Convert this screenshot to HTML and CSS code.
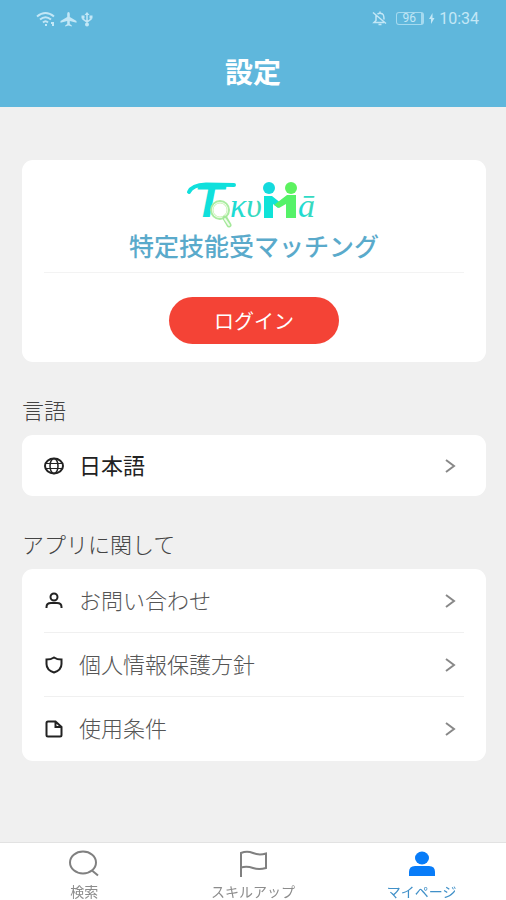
FILE: index.html
```
<!DOCTYPE html>
<html lang="ja">

<head>
    <meta charset="UTF-8">
    <meta name="viewport" content="width=device-width, initial-scale=1.0">
    <title>設定</title>
    <link rel="stylesheet" href="styles.css">
</head>

<body>
    <header class="header">
        <div class="status-bar">
            <div class="status-group">
                <svg width="20" height="16" viewBox="0 0 20 16" fill="none" stroke="currentColor" stroke-width="2">
                    <path d="M1 5.500Q9.500-1.500 18 5.500M4 8.500Q9.500 4 15 8.500M7 11.500Q9.500 9 12 11.500" />
                    <path d="M9 14h2M15 12h3M16 14h2" />
                </svg>
                <svg width="17" height="16" viewBox="0 0 17 16" fill="currentColor">
                    <path d="M8.500 1q1.300 0 1.300 2v3l6.700 4v1.800L9.800 10v3l2 1.400v1l-3.300-.9-3.300.9v-1l2-1.400v-3L0.500 11.800V10l6.700-4V3q0-2 1.300-2z" />
                </svg>
                <svg width="12" height="16" viewBox="0 0 12 16" fill="none" stroke="currentColor" stroke-width="1.500">
                    <path d="M6 3v10M2 6v2l4 3 4-3V5" />
                    <path d="M3.500 4L6 1l2.500 3zM0.500 4.500h3v3h-3zM8.500 4.500h3v3h-3z" fill="currentColor" stroke="none" />
                    <circle cx="6" cy="13.500" r="2" fill="currentColor" stroke="none" />
                </svg>
            </div>
            <div class="status-group">
                <svg width="16" height="15" viewBox="0 0 16 15" fill="none" stroke="currentColor" stroke-width="1.500">
                    <path d="M1 1.500l13 11M4 4.500v5L2 11.500h10M5.500 3Q8 1.500 10.500 3 12 4 12 8.500M8 0.500v2M6.500 13.500h3" />
                </svg>
                <span class="battery">96</span>
                <svg width="7" height="13" viewBox="0 0 7 13" fill="currentColor">
                    <path d="M4.500 1L1 7h2v5l3.500-6H4.500z" />
                </svg>
                <span class="clock">10:34</span>
            </div>
        </div>
        <h1 class="title">設定</h1>
    </header>

    <main class="content">
        <section class="card login-card">
            <svg class="logo" width="136" height="58" viewBox="0 -8 136 58" role="img" aria-label="TokuMa">
                <defs>
                    <linearGradient id="ink" x1="0" x2="1">
                        <stop offset="0" stop-color="#18dcd8" />
                        <stop offset="1" stop-color="#3ed8b8" />
                    </linearGradient>
                </defs>
                <text class="logo-cap" x="8" y="37">T</text>
                <path d="M3 12Q6 5 20 4.500L48 5" fill="none" stroke="#10e0dc" stroke-width="4" stroke-linecap="round" />
                <!-- magnifier -->
                <circle cx="34" cy="30" r="9" fill="none" stroke="#a9eca0" stroke-width="2" />
                <circle cx="34" cy="30" r="7" fill="none" stroke="#c9f3b4" stroke-width="1" />
                <path d="M39 38l4 7" stroke="#a4e89a" stroke-width="5" stroke-linecap="round" />
                <path d="M39 39l4 6" stroke="#f0fdec" stroke-width="2" stroke-linecap="round" />
                <text class="logo-small" x="44" y="37" fill="url(#ink)">κυ</text>
                <!-- two people shaking hands -->
                <circle cx="83" cy="8" r="6" fill="#14dadd" />
                <circle cx="105" cy="8" r="6" fill="#5cf25f" />
                <path d="M78 16h8l10 8-4 4-5-4v14h-9z" fill="#0fe3d8" />
                <path d="M110 15v23h-10V24l-7 4-5-3 13-10z" fill="#55f268" />
                <text class="logo-small" x="112" y="37" fill="url(#ink)">ā</text>
            </svg>
            <h2 class="tagline">特定技能受マッチング</h2>
            <hr class="divider">
            <button type="button" class="login-button">ログイン</button>
        </section>

        <h2 class="section-label">言語</h2>
        <nav class="card list" aria-label="言語">
            <a class="row row-language" href="#language">
                <svg class="row-icon" viewBox="0 0 20 20">
                    <ellipse cx="10" cy="10" rx="9" ry="7.500" />
                    <ellipse cx="10" cy="10" rx="4" ry="7.500" stroke-width="1.500" />
                    <path d="M2 7.500h16M2 12.500h16" stroke-width="1.200" />
                </svg>
                <span class="row-text">日本語</span>
                <svg class="chevron" viewBox="0 0 12 16"><path d="M2 2l8 6-8 6" /></svg>
            </a>
        </nav>

        <h2 class="section-label">アプリに関して</h2>
        <nav class="card list" aria-label="アプリに関して">
            <a class="row" href="#contact">
                <svg class="row-icon" viewBox="0 0 20 20">
                    <circle cx="10" cy="6" r="3.500" />
                    <path d="M2.500 17v-1Q2.500 12 7 12h6q4.500 0 4.500 4v1" />
                </svg>
                <span class="row-text">お問い合わせ</span>
                <svg class="chevron" viewBox="0 0 12 16"><path d="M2 2l8 6-8 6" /></svg>
            </a>
            <a class="row" href="#privacy">
                <svg class="row-icon" viewBox="0 0 20 20">
                    <path d="M10 2.500Q7 4.500 2.500 4.500V9q0 6 7.500 8.500 7.500-2.500 7.500-8.500V4.500Q13 4.500 10 2.500z" />
                </svg>
                <span class="row-text">個人情報保護方針</span>
                <svg class="chevron" viewBox="0 0 12 16"><path d="M2 2l8 6-8 6" /></svg>
            </a>
            <a class="row" href="#terms">
                <svg class="row-icon" viewBox="0 0 20 20">
                    <path d="M4 2.500h7.500l6 5.500v8q0 1.500-1.500 1.500H4q-1.500 0-1.500-1.500V4Q2.500 2.500 4 2.500zM11.500 2.500V8h6" />
                </svg>
                <span class="row-text">使用条件</span>
                <svg class="chevron" viewBox="0 0 12 16"><path d="M2 2l8 6-8 6" /></svg>
            </a>
        </nav>
    </main>

    <nav class="tab-bar" aria-label="メニュー">
        <a class="tab" href="#search">
            <svg class="tab-icon" viewBox="0 0 32 28">
                <ellipse cx="15" cy="12.500" rx="13" ry="11" />
                <path d="M24 20.500l6 5" />
            </svg>
            <span>検索</span>
        </a>
        <a class="tab" href="#skill">
            <svg class="tab-icon" viewBox="0 0 32 28">
                <path d="M4 27V3Q10 0.500 16 3t13 0.500V18Q22 20 16 18T4 17.500" />
            </svg>
            <span>スキルアップ</span>
        </a>
        <a class="tab active" href="#mypage">
            <svg class="tab-icon" viewBox="0 0 32 28">
                <ellipse cx="16" cy="8" rx="7" ry="6.500" />
                <path d="M3 26v-4q0-6 6-6h14q6 0 6 6v4z" />
            </svg>
            <span>マイページ</span>
        </a>
    </nav>
</body>

</html>
```
FILE: styles.css
```
* {
    box-sizing: border-box;
}

body {
    display: flex;
    flex-direction: column;
    min-height: 100vh;
    margin: 0;
    background-color: #f0f0f0;
    color: #555;
    font-family: "Noto Sans CJK JP", sans-serif;
}

svg {
    display: block;
    flex-shrink: 0;
}

a {
    text-decoration: none;
}

.header {
    background-color: #5fb7dc;
    color: #fff;
    padding-bottom: 16px;
}

.status-bar {
    display: flex;
    justify-content: space-between;
    align-items: center;
    height: 37px;
    padding: 0 27px 0 36px;
    color: #c3e7f6;
}

.status-group {
    display: flex;
    align-items: center;
    gap: 4px;
}

.status-group .clock {
    font-family: Roboto, sans-serif;
    font-size: 16px;
    line-height: 18px;
}

.battery {
    width: 28px;
    border: 1px solid #a5daef;
    border-right-width: 3px;
    border-radius: 3px;
    margin-left: 4px;
    font-family: Roboto, sans-serif;
    font-size: 12px;
    line-height: 11px;
    text-align: center;
}

.title {
    margin: 0;
    padding-top: 14px;
    font-size: 28px;
    font-weight: 700;
    line-height: 40px;
    text-align: center;
}

.content {
    flex: 1;
    padding: 53px 20px 32px 22px;
}

.card {
    background-color: #fff;
    border-radius: 11px;
}

.login-card {
    display: flex;
    flex-direction: column;
    align-items: center;
    padding: 12px 22px 18px;
}

.logo {
    overflow: visible;
}

.logo-cap {
    fill: #10e0dc;
    font-family: "Liberation Sans", sans-serif;
    font-size: 48px;
    font-style: italic;
    font-weight: 700;
}

.logo-small {
    font-family: "Liberation Serif", serif;
    font-size: 34px;
    font-style: italic;
}

.tagline {
    margin: 0;
    color: #5aaacb;
    font-size: 25px;
    font-weight: 500;
    line-height: 30px;
}

.divider {
    width: 100%;
    margin: 12px 0 24px;
    border: 0;
    border-top: 1px solid #f3f3f3;
}

.login-button {
    padding: 0 45px;
    border: none;
    border-radius: 24px;
    background-color: #f44336;
    color: #fff;
    font-family: inherit;
    font-size: 20px;
    font-weight: 400;
    line-height: 47px;
    cursor: pointer;
}

.section-label {
    margin: 31px 0 10px;
    color: #444;
    font-size: 22px;
    font-weight: 300;
    line-height: 32px;
}

.list {
    padding: 0 22px;
}

.row {
    display: flex;
    align-items: center;
    gap: 15px;
    min-height: 64px;
    border-bottom: 1px solid #f0f0f0;
    color: #555;
    font-size: 22px;
    font-weight: 300;
    line-height: 32px;
}

.row:last-child {
    border-bottom: none;
}

.row-language {
    min-height: 61px;
    color: #222;
    font-weight: 400;
}

.row-text {
    flex: 1;
    padding-bottom: 4px;
}

.row-icon {
    width: 20px;
    height: 20px;
    fill: none;
    stroke: #222;
    stroke-width: 2;
}

.chevron {
    width: 12px;
    height: 16px;
    margin-right: 8px;
    fill: none;
    stroke: #888;
    stroke-width: 2;
}

.tab-bar {
    position: sticky;
    bottom: 0;
    display: flex;
    border-top: 1px solid #e2e2e2;
    background-color: #fff;
}

.tab {
    display: flex;
    flex: 1;
    flex-direction: column;
    align-items: center;
    gap: 4px;
    padding-top: 7px;
    color: #8c8c8c;
    font-size: 14px;
    line-height: 18px;
}

.tab-icon {
    width: 32px;
    height: 28px;
    fill: none;
    stroke: #808080;
    stroke-width: 2;
}

.tab.active {
    color: #4090c8;
}

.active .tab-icon {
    fill: #087cf8;
    stroke: none;
}
```
